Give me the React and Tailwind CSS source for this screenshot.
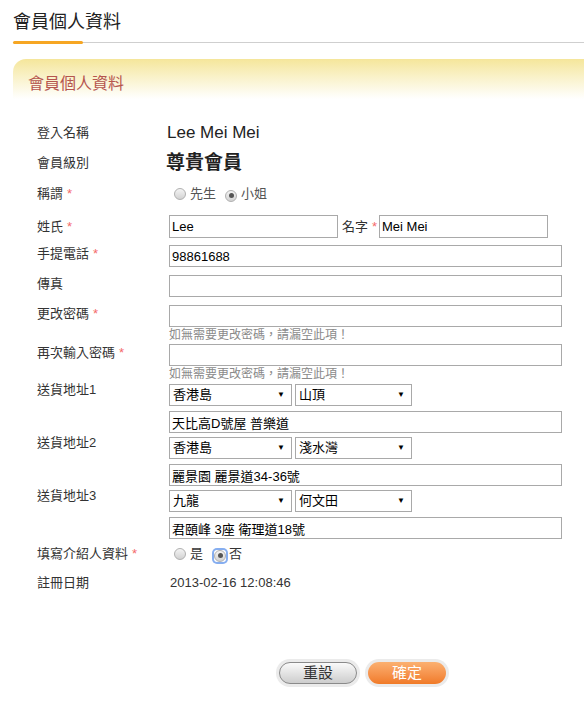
const ff = "font-['Liberation_Sans','Noto_Sans_CJK_TC',sans-serif]";

const Star = () => <span className="ml-[4px] text-[#f46a6a]">*</span>;

const Label = ({ children, req, tight }) => (
  <div
    className={`w-[169px] shrink-0 pl-[37px] text-[13px] text-[#333] ${tight ? 'leading-[12px]' : 'leading-[18px]'}`}
  >
    {children}
    {req && <Star />}
  </div>
);

const Field = ({ value = '', w = 'w-[393px]', h = 'h-[22px]' }) => (
  <input
    readOnly
    value={value}
    className={`block ${w} ${h} border border-[#a9a9a9] bg-white px-[2px] text-[13px] text-black outline-none ${ff}`}
  />
);

const Select = ({ value, w }) => (
  <div className={`${w} h-[22px] flex items-center justify-between border border-[#a9a9a9] bg-white pl-[3px] pr-[6px] text-[13px] text-black`}>
    <span>{value}</span>
    <span className="text-[8px] leading-none">▼</span>
  </div>
);

const Radio = ({ checked, focus }) => (
  <span
    className={`inline-flex items-center justify-center rounded-[3px] ${focus ? 'ring-2 ring-[#86aef0]' : ''}`}
  >
    <span className="flex h-[12px] w-[12px] items-center justify-center rounded-full border border-[#b0b0b0] bg-linear-to-b from-[#f4f4f4] to-[#d2d2d2]">
      {checked && <span className="h-[5px] w-[5px] rounded-full bg-[#555]" />}
    </span>
  </span>
);

const Hint = () => (
  <div className="pl-[169px] text-[12px] leading-[16px] text-[#8a8a8a]">
    如無需要更改密碼，請漏空此項！
  </div>
);

const Address = ({ n, a, b, addr, mt }) => (
  <div className={mt}>
    <div className="flex">
      <Label tight>送貨地址{n}</Label>
      <div className="flex gap-[3px]">
        <Select value={a} w="w-[123px]" />
        <Select value={b} w="w-[117px]" />
      </div>
    </div>
    <div className="mt-[5px] pl-[169px]">
      <Field value={addr} />
    </div>
  </div>
);

export default function App() {
  return (
    <div className={`min-h-[707px] w-[584px] bg-white text-[#333] ${ff}`}>
      {/* page title */}
      <div className="h-[42px] pl-[13px] pt-[10px] text-[18px] leading-[24px] text-[#222]">會員個人資料</div>
      <div className="ml-[13px] h-px bg-[#cfcfcf]" />
      <div className="-mt-[2px] ml-[13px] h-[3px] w-[70px] rounded-full bg-[#f6a623]" />

      {/* section header */}
      <div className="ml-[13px] mt-[15px] h-[40px] rounded-tl-[13px] bg-linear-to-b from-[#f5e69a] to-white pl-[15px] pt-[15px] text-[16px] leading-[20px] text-[#b5554e]">
        會員個人資料
      </div>

      {/* form */}
      <div className="mt-[19px]">
        <div className="flex h-[30px] items-center">
          <Label>登入名稱</Label>
          <span className="-ml-[2px] text-[17px] text-[#222]">Lee Mei Mei</span>
        </div>
        <div className="flex h-[30px] items-center">
          <Label>會員級別</Label>
          <span className="-ml-[3px] text-[19px] font-bold text-[#222]">尊貴會員</span>
        </div>
        <div className="mt-px flex h-[30px] items-center">
          <Label req>稱謂</Label>
          <div className="flex items-center pl-[5px] text-[13px] text-[#555]">
            <Radio />
            <span className="ml-[4px]">先生</span>
            <span className="ml-[9px]"><Radio checked /></span>
            <span className="ml-[4px]">小姐</span>
          </div>
        </div>

        <div className="mt-[6px] flex items-center">
          <Label req>姓氏</Label>
          <Field value="Lee" w="w-[169px]" h="h-[23px]" />
          <span className="ml-[4px] w-[37px] text-[13px]">名字<Star /></span>
          <Field value="Mei Mei" w="w-[169px]" h="h-[23px]" />
        </div>

        <div className="mt-[7px] flex items-start">
          <Label req>手提電話</Label>
          <Field value="98861688" />
        </div>
        <div className="mt-[8px] flex items-start">
          <Label>傳真</Label>
          <Field />
        </div>
        <div className="mt-[8px] flex items-start">
          <Label req>更改密碼</Label>
          <Field />
        </div>
        <Hint />
        <div className="mt-px flex items-start">
          <Label req>再次輸入密碼</Label>
          <Field />
        </div>
        <Hint />

        <Address n="1" a="香港島" b="山頂" addr="天比高D號屋 普樂道" mt="mt-[2px]" />
        <Address n="2" a="香港島" b="淺水灣" addr="麗景園 麗景道34-36號" mt="mt-[4px]" />
        <Address n="3" a="九龍" b="何文田" addr="君頤峰 3座 衛理道18號" mt="mt-[4px]" />

        <div className="flex h-[30px] items-center">
          <Label req>填寫介紹人資料</Label>
          <div className="flex items-center pl-[5px] text-[13px] text-[#333]">
            <Radio />
            <span className="ml-[4px]">是</span>
            <span className="ml-[11px]"><Radio checked focus /></span>
            <span className="ml-[3px]">否</span>
          </div>
        </div>
        <div className="flex h-[28px] items-center">
          <Label>註冊日期</Label>
          <span className="ml-px text-[13px] text-[#333]">2013-02-16 12:08:46</span>
        </div>

        {/* buttons */}
        <div className="mt-[62px] flex gap-[5px] pl-[276px]">
          <span className="rounded-full bg-[#ebebeb] p-[3px]">
            <button className="flex h-[22px] w-[78px] items-center justify-center rounded-full border border-[#8a8a8a] bg-linear-to-b from-[#fafafa] to-[#cdcdcd] text-[15px] text-[#333]">
              重設
            </button>
          </span>
          <span className="rounded-full bg-[#ebebeb] p-[3px]">
            <button className="flex h-[22px] w-[78px] items-center justify-center rounded-full bg-linear-to-b from-[#fbb070] to-[#f07a26] text-[15px] text-white">
              確定
            </button>
          </span>
        </div>
      </div>
    </div>
  );
}
